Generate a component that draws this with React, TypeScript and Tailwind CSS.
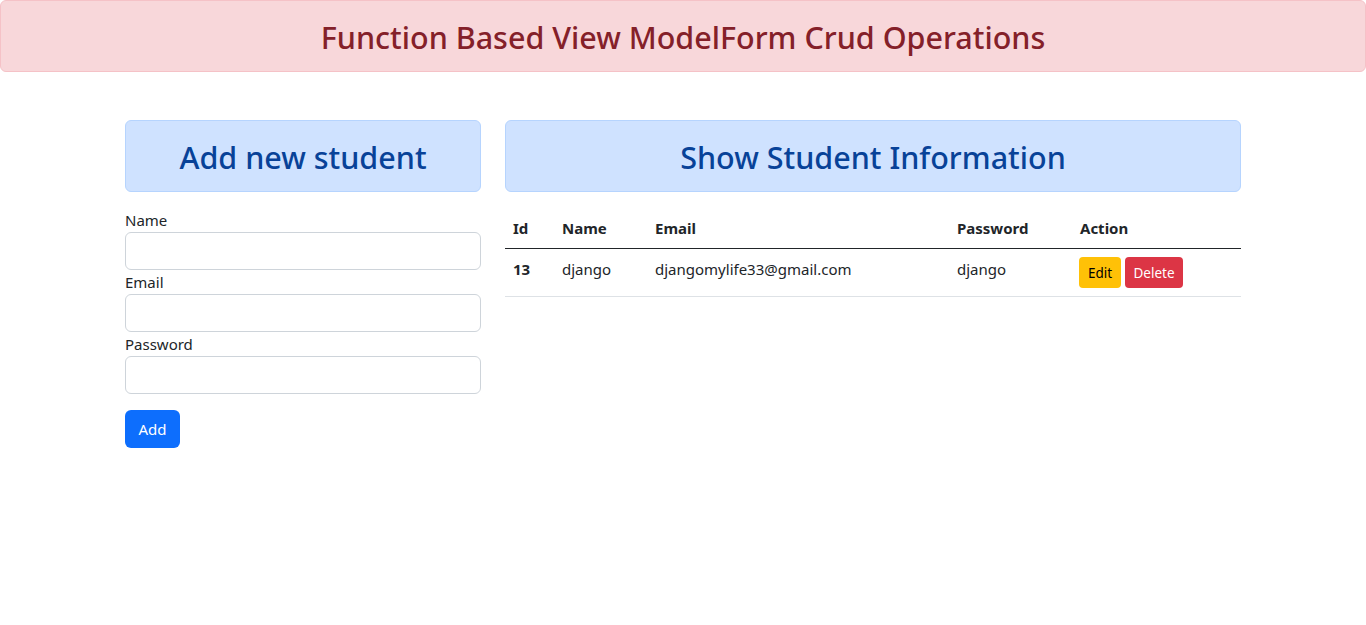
const font = { fontFamily: '"Noto Sans", "Open Sans", sans-serif' };

const students = [
  { id: 13, name: "django", email: "djangomylife33@gmail.com", password: "django" },
];

function Field({ label, type }: { label: string; type: string }) {
  return (
    <div>
      <label className="block text-[15px] leading-6 text-[#212529]">{label}</label>
      <input
        type={type}
        className="block w-full h-[38px] px-3 border border-[#ced4da] rounded-[6px] bg-white outline-none"
      />
    </div>
  );
}

export default function App() {
  return (
    <div className="min-h-[625px] bg-white text-[#212529]" style={font}>
      <div className="h-[72px] flex items-center justify-center pt-[2px] bg-[#f8d7da] border border-[#f5c2c7] rounded-[6px] text-[#842029]">
        <h2 className="text-[30.5px] leading-[38px] font-medium">Function Based View ModelForm Crud Operations</h2>
      </div>

      <div className="w-[1140px] mx-auto px-3 mt-12 flex gap-6">
        <div className="w-[356px] shrink-0">
          <div className="h-[72px] flex items-center justify-center pt-[2px] bg-[#cfe2ff] border border-[#b6d4fe] rounded-[6px] text-[#084298] mb-4">
            <h2 className="text-[30.5px] leading-[38px] font-medium">Add new student</h2>
          </div>
          <form onSubmit={(e) => e.preventDefault()}>
            <Field label="Name" type="text" />
            <Field label="Email" type="email" />
            <Field label="Password" type="password" />
            <button
              type="submit"
              className="mt-4 h-[38px] w-[55px] bg-[#0d6efd] text-white text-[15px] rounded-[6px]"
            >
              Add
            </button>
          </form>
        </div>

        <div className="w-[736px] shrink-0">
          <div className="h-[72px] flex items-center justify-center pt-[2px] bg-[#cfe2ff] border border-[#b6d4fe] rounded-[6px] text-[#084298] mb-4">
            <h2 className="text-[30.5px] leading-[38px] font-medium">Show Student Information</h2>
          </div>
          <table className="w-full border-collapse text-[15px] leading-6 table-fixed">
            <colgroup>
              <col className="w-[49px]" />
              <col className="w-[93px]" />
              <col className="w-[302px]" />
              <col className="w-[123px]" />
              <col />
            </colgroup>
            <thead>
              <tr className="border-b border-[#212529]">
                <th className="p-2 text-left font-bold">Id</th>
                <th className="p-2 text-left font-bold">Name</th>
                <th className="p-2 text-left font-bold">Email</th>
                <th className="p-2 text-left font-bold">Password</th>
                <th className="p-2 text-left font-bold">Action</th>
              </tr>
            </thead>
            <tbody>
              {students.map((s) => (
                <tr key={s.id} className="border-b border-[#dee2e6] align-top">
                  <th className="p-2 text-left font-bold">{s.id}</th>
                  <td className="p-2">{s.name}</td>
                  <td className="p-2">{s.email}</td>
                  <td className="p-2">{s.password}</td>
                  <td className="p-2 pl-[7px]">
                    <div className="flex gap-1">
                      <button className="h-[31px] w-[42px] bg-[#ffc107] text-black text-[13.5px] rounded-[4px]">Edit</button>
                      <button className="h-[31px] w-[58px] bg-[#dc3545] text-white text-[13.5px] rounded-[4px]">Delete</button>
                    </div>
                  </td>
                </tr>
              ))}
            </tbody>
          </table>
        </div>
      </div>
    </div>
  );
}
